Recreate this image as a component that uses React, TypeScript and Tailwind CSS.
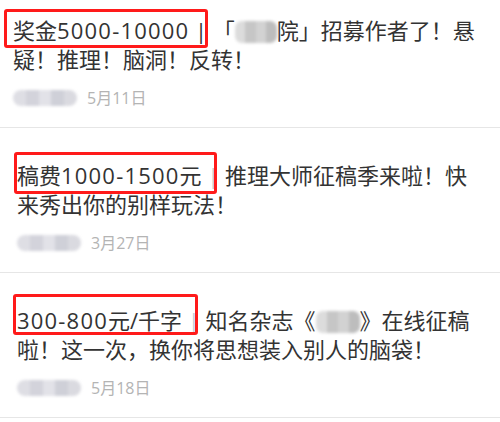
import React from 'react';

// blurred-out word inside a title
const Mosaic: React.FC<{ w: number }> = ({ w }) => (
  <span
    className="inline-flex h-[22px] align-[-4px] overflow-hidden rounded-[7px] blur-[1.5px]"
    style={{ width: w }}
  >
    <span className="flex-1 bg-[#dcdcdc]" />
    <span className="flex-1 bg-[#c6c6c6]" />
    <span className="flex-1 bg-[#d2d2d2]" />
    <span className="flex-1 bg-[#bdbdbd]" />
  </span>
);

// blurred-out author avatar + name
const Avatar = () => (
  <div className="flex h-[16px] w-[64px] overflow-hidden rounded-full blur-[1.5px]">
    <span className="flex-1 bg-[#dedee4]" />
    <span className="flex-1 bg-[#d3d3db]" />
    <span className="flex-1 bg-[#e2e2e8]" />
    <span className="flex-1 bg-[#cfd0d8]" />
    <span className="flex-1 bg-[#dadae0]" />
  </div>
);

const Num: React.FC<{ children: React.ReactNode }> = ({ children }) => (
  <span className="tracking-[1.2px]">{children}</span>
);

interface ItemProps {
  first?: boolean;
  line1: React.ReactNode;
  line2: React.ReactNode;
  date: string;
}

const Item: React.FC<ItemProps> = ({ first, line1, line2, date }) => (
  <div
    className={
      first
        ? 'pt-[16px] pb-[19px] pl-[13px] border-b border-[#e6e6e6]'
        : 'pt-[33px] pb-[19px] pl-[17px] border-b border-[#e6e6e6] last:border-b-0'
    }
  >
    <div className="text-[22px] leading-[29px] text-[#333] whitespace-nowrap">
      <div>{line1}</div>
      <div>{line2}</div>
    </div>
    <div className="mt-[14px] flex h-[20px] items-center">
      <Avatar />
      <span className="ml-[10px] text-[16px] text-[#b4b4b4]">{date}</span>
    </div>
  </div>
);

export default function App() {
  return (
    <div className="relative h-[422px] w-[500px] overflow-hidden bg-white font-['Open_Sans','Noto_Sans_CJK_SC',sans-serif]">
      <Item
        first
        line1={
          <>
            奖金<Num>5000-10000</Num> | 「<Mosaic w={42} />院」招募作者了！悬
          </>
        }
        line2="疑！推理！脑洞！反转！"
        date="5月11日"
      />
      <Item
        line1={
          <>
            稿费<Num>1000-1500</Num>元 <span className="text-[#c8c8c8]">|</span> 推理大师征稿季来啦！快
          </>
        }
        line2="来秀出你的别样玩法！"
        date="3月27日"
      />
      <Item
        line1={
          <>
            <Num>300-800</Num>元/千字 <span className="text-[#c4cbd6]">|</span> 知名杂志《<Mosaic w={44} />》在线征稿
          </>
        }
        line2="啦！这一次，换你将思想装入别人的脑袋！"
        date="5月18日"
      />

      {/* red highlight boxes drawn on top */}
      <div className="absolute left-[4px] top-[9px] h-[39px] w-[204px] rounded-[3px] border-[3px] border-[#ff1a1a]" />
      <div className="absolute left-[14px] top-[152px] h-[42px] w-[203px] rounded-[3px] border-[3px] border-[#ff1a1a]" />
      <div className="absolute left-[13px] top-[294px] h-[41px] w-[185px] rounded-[3px] border-[3px] border-[#ff1a1a]" />
    </div>
  );
}
